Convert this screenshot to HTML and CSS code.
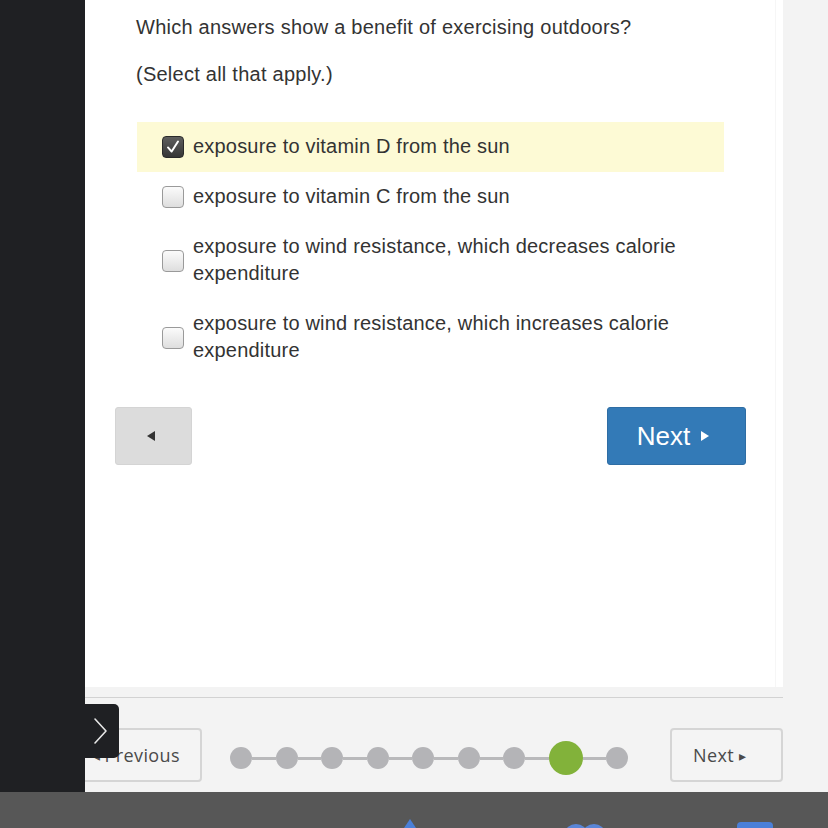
FILE: index.html
```html
<!DOCTYPE html>
<html lang="en">
<head>
<meta charset="utf-8">
<title>Question</title>
<link rel="stylesheet" href="styles.css">
</head>
<body>
<div class="app">
  <div class="upper">
    <main class="content">
      <p class="question">Which answers show a benefit of exercising outdoors?</p>
      <p class="hint">(Select all that apply.)</p>
      <ul class="options">
        <li class="option selected">
          <span class="box checked"><svg viewBox="0 0 22 22" width="22" height="22"><path d="M5.5 11.5 L9.5 16 L16.5 5" fill="none" stroke="#fff" stroke-width="2.2" stroke-linecap="round" stroke-linejoin="round"/></svg></span>
          <span class="label">exposure to vitamin D from the sun</span>
        </li>
        <li class="option">
          <span class="box"></span>
          <span class="label">exposure to vitamin C from the sun</span>
        </li>
        <li class="option">
          <span class="box"></span>
          <span class="label">exposure to wind resistance, which decreases calorie expenditure</span>
        </li>
        <li class="option">
          <span class="box"></span>
          <span class="label">exposure to wind resistance, which increases calorie expenditure</span>
        </li>
      </ul>
      <div class="actions">
        <button class="btn-back" aria-label="Back"><svg viewBox="0 0 10 12" width="10" height="12"><path d="M9 1 L1 6 L9 11 Z" fill="#333"/></svg></button>
        <button class="btn-next">Next <svg viewBox="0 0 10 12" width="10" height="12"><path d="M1 1 L9 6 L1 11 Z" fill="#fff"/></svg></button>
      </div>
    </main>
    <div class="gutter"></div>
  </div>
  <footer class="pager">
    <div class="pager-inner">
      <button class="pg-btn pg-prev"><span class="tri">&#9666;</span> Previous</button>
      <div class="dots">
        <span class="dot"></span><span class="link"></span>
        <span class="dot"></span><span class="link"></span>
        <span class="dot"></span><span class="link"></span>
        <span class="dot"></span><span class="link"></span>
        <span class="dot"></span><span class="link"></span>
        <span class="dot"></span><span class="link"></span>
        <span class="dot"></span><span class="link"></span>
        <span class="dot current"></span><span class="link"></span>
        <span class="dot"></span>
      </div>
      <button class="pg-btn pg-next">Next <span class="tri">&#9656;</span></button>
    </div>
  </footer>
  <div class="taskbar">
    <svg class="taskbar-icons" viewBox="0 0 828 36" width="828" height="36">
      <path d="M404 36 L410 27 L416 36 Z" fill="#4a7fd8"/>
      <ellipse cx="576" cy="41" rx="11" ry="9" fill="#5a86d8"/>
      <ellipse cx="594" cy="41" rx="11" ry="9" fill="#5a86d8"/>
      <rect x="737" y="30" width="36" height="14" rx="4" fill="#4a7fd8"/>
    </svg>
  </div>
  <aside class="drawer">
    <button class="drawer-tab" aria-label="Open"><svg viewBox="0 0 20 32" width="20" height="32"><path d="M5 4 L16 16 L5 28" fill="none" stroke="#e6e6e6" stroke-width="1.6" stroke-linecap="round" stroke-linejoin="round"/></svg></button>
  </aside>
</div>
</body>
</html>
```
FILE: styles.css
```css
* { box-sizing: border-box; }
html, body { margin: 0; padding: 0; }
body {
  width: 828px;
  height: 828px;
  overflow: hidden;
  font-family: "Liberation Sans", Arial, sans-serif;
  color: #333;
}
.app {
  position: relative;
  width: 828px;
  height: 828px;
  display: flex;
  flex-direction: column;
}
.upper {
  height: 687px;
  display: flex;
}
.content {
  width: 783px;
  background: #fff;
  border-right: 7px solid #fff;
  box-shadow: inset -1px 0 0 #f6f6f6;
  padding: 16px 30px 0 115px;
}
.gutter {
  flex: 1;
  background: #f3f3f3;
}
.question, .hint {
  margin: 0 0 0 21px;
  font-size: 20px;
  line-height: 22px;
  letter-spacing: 0.25px;
  color: #333;
}
.hint { margin-top: 25px; }
.options {
  list-style: none;
  margin: 37px 0 0 22px;
  padding: 0;
  width: 587px;
}
.option {
  display: flex;
  align-items: center;
  padding: 11.5px 20px 11.5px 25px;
  font-size: 20px;
  letter-spacing: 0.2px;
  line-height: 27px;
}
.option .label { position: relative; top: -1px; }
.option.selected { background: #fdfad5; }
.box {
  flex: none;
  width: 22px;
  height: 22px;
  border: 1px solid #9a9a9a;
  border-radius: 4px;
  background: linear-gradient(#fbfbfb, #dedede);
  margin-right: 9px;
  display: flex;
  align-items: center;
  justify-content: center;
}
.box.checked {
  background: linear-gradient(#5e5e5e, #363636);
  border-color: #2a2a2a;
}
.box svg { display: block; }
.label { color: #333; }
.actions {
  margin-top: 31px;
  display: flex;
  justify-content: space-between;
}
.btn-back {
  width: 77px;
  height: 58px;
  background: #dcdcdc;
  border: 1px solid #d4d4d4;
  border-radius: 3px;
  display: flex;
  align-items: center;
  justify-content: center;
  padding: 0;
}
.btn-back svg { margin-right: 6px; }
.btn-next {
  width: 139px;
  height: 58px;
  background: #337ab7;
  border: 1px solid #2e6da4;
  border-radius: 3px;
  color: #fff;
  font-family: "Liberation Sans", Arial, sans-serif;
  font-size: 26px;
  display: flex;
  align-items: center;
  justify-content: center;
  gap: 10px;
  padding: 0 6px 0 0;
}
.pager {
  height: 105px;
  background: #f3f3f3;
}
.pager-inner {
  width: 783px;
  margin-top: 10px;
  border-top: 1px solid #d2d2d2;
  padding-top: 30px;
  display: flex;
  align-items: center;
}
.pg-btn {
  height: 54px;
  background: #f4f4f4;
  border: 2px solid #d5d5d5;
  border-radius: 4px;
  font-family: "Open Sans", "Liberation Sans", sans-serif;
  font-size: 18px;
  letter-spacing: 0.4px;
  color: #4a4a4a;
  padding: 0;
  display: flex;
  align-items: center;
}
.pg-btn .tri { font-size: 14px; }
.pg-prev {
  margin-left: 59px;
  width: 143px;
  justify-content: flex-end;
  padding-right: 20px;
  gap: 4px;
}
.pg-next {
  margin-left: 42px;
  width: 113px;
  padding-left: 21px;
  gap: 5px;
}
.dots {
  margin-left: 28px;
  width: 398px;
  display: flex;
  align-items: center;
  margin-top: 6px;
}
.dot {
  flex: none;
  width: 22px;
  height: 22px;
  border-radius: 50%;
  background: #b4b4b7;
}
.dot.current {
  width: 34px;
  height: 34px;
  background: #82b23a;
}
.link {
  flex: 1;
  height: 3px;
  background: #b9b9bb;
}
.taskbar {
  height: 36px;
  background: #575757;
  overflow: hidden;
}
.taskbar-icons { display: block; }
.drawer {
  position: absolute;
  left: 0;
  top: 0;
  width: 85px;
  height: 792px;
  background: #1f2023;
}
.drawer-tab {
  position: absolute;
  left: 85px;
  top: 704px;
  width: 34px;
  height: 54px;
  background: #1f2023;
  border: 0;
  border-radius: 0 5px 5px 0;
  padding: 0;
  display: flex;
  align-items: center;
  justify-content: flex-start;
  padding-left: 5px;
}
.drawer-tab svg { display: block; }
```
